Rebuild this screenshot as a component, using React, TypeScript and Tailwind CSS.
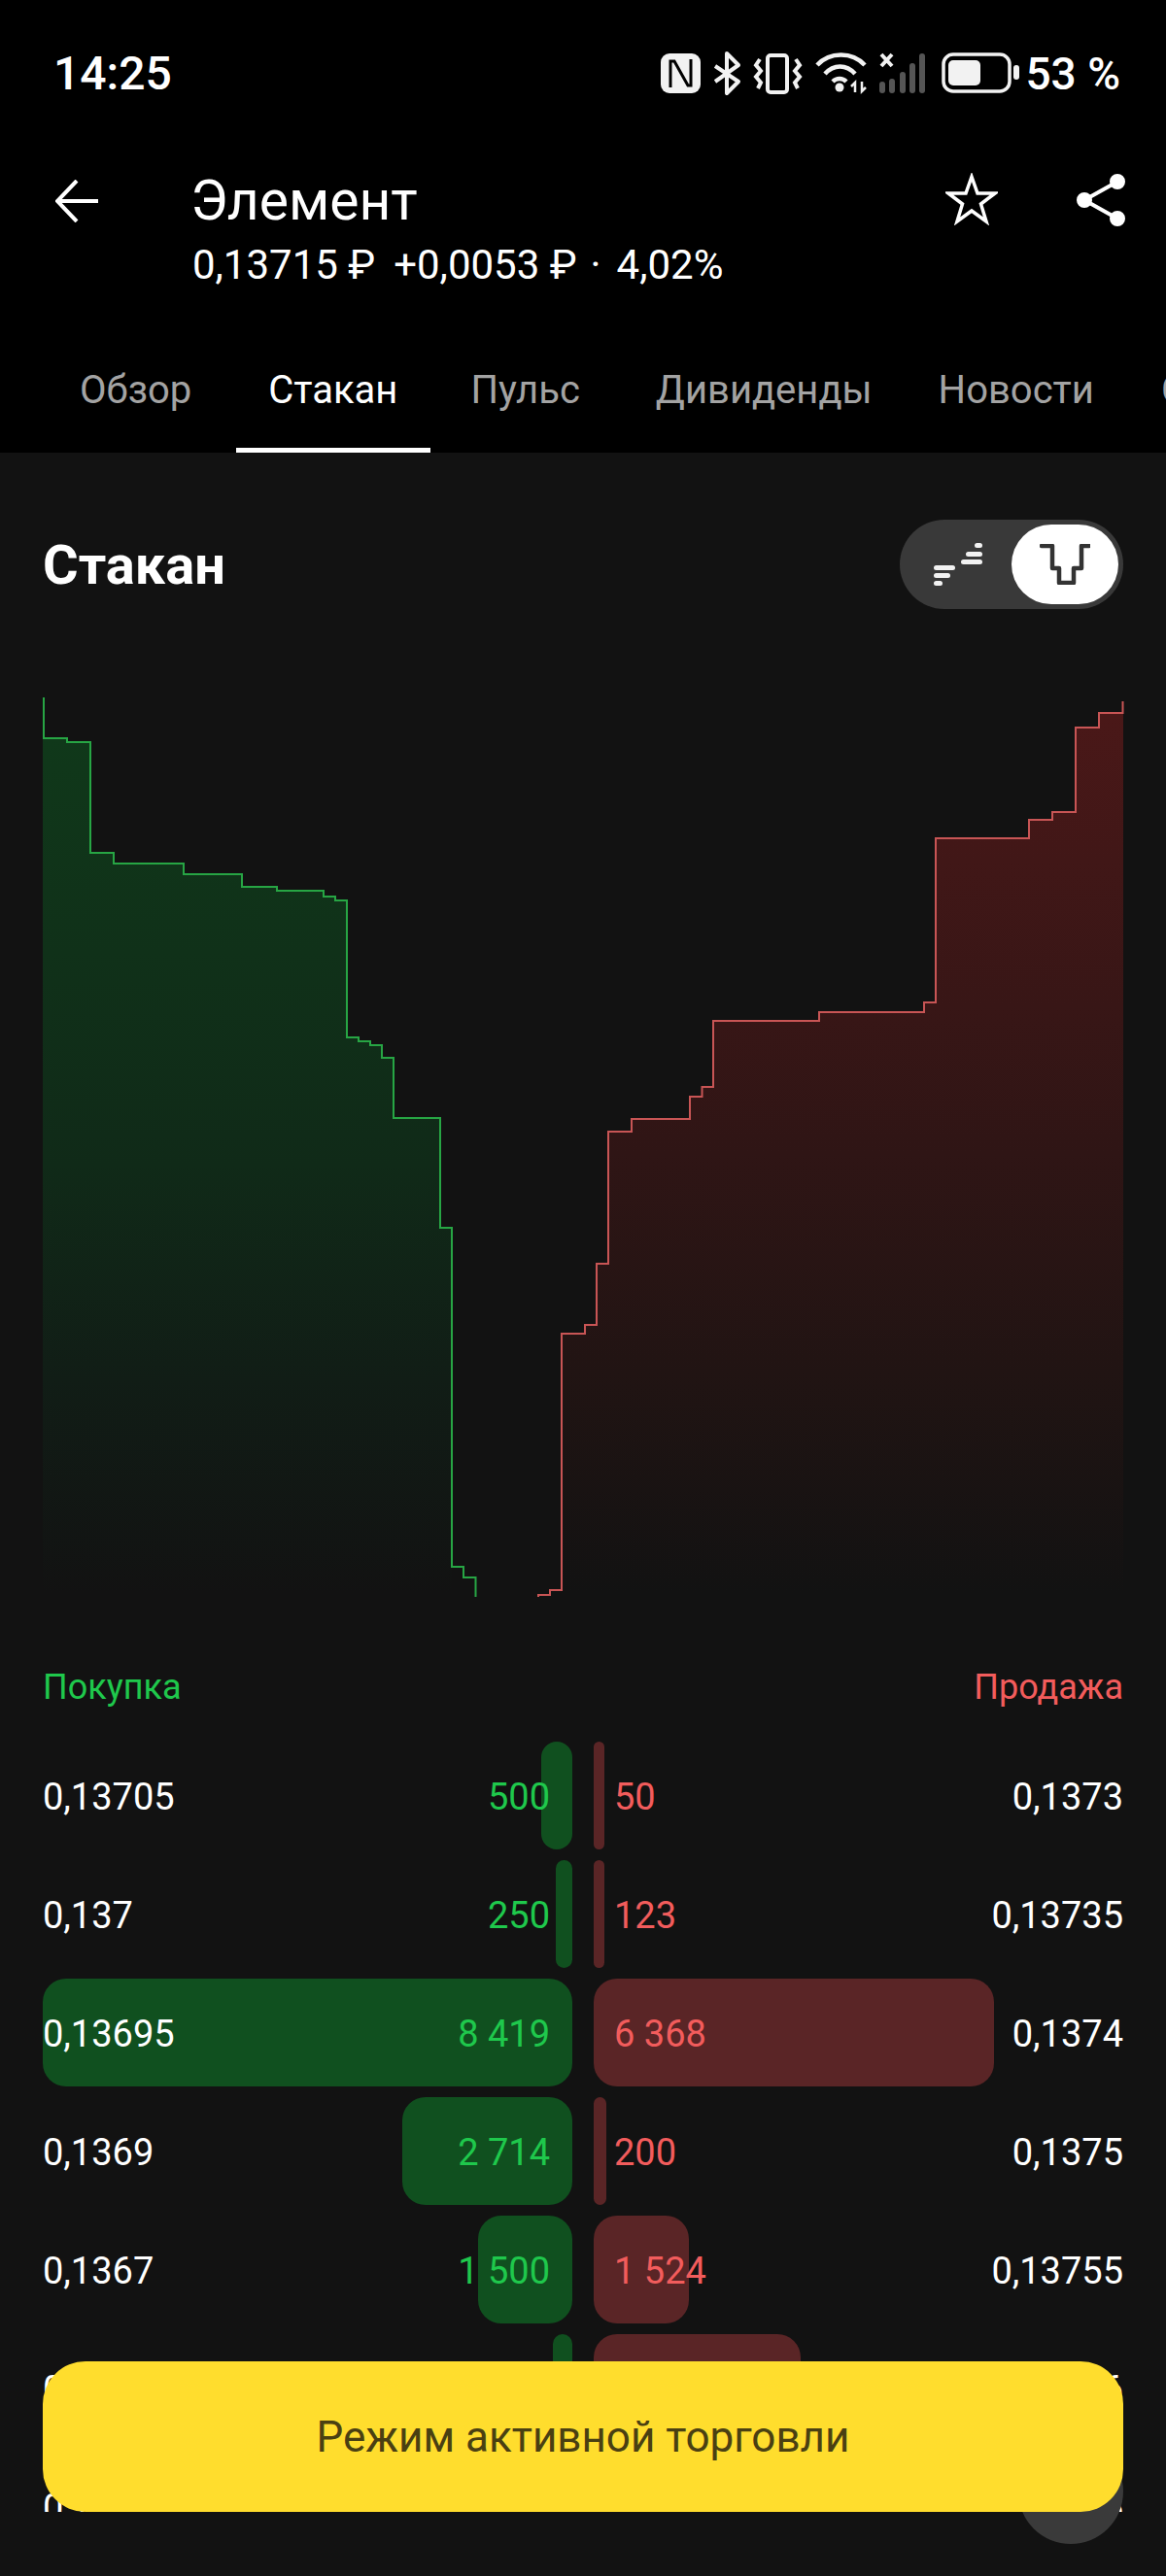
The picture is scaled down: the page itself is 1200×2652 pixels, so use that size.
const green = "M45 718V760H69V764H93V878H117V889H189V900H249V913H285V917H333V923H345V927H357V1068H369V1072H381V1076H393V1089H405V1151H453V1264H465V1613H477V1624H489.5V1644";
const red = "M1155.5 722V734H1131V749H1107V836H1083V844H1059V863H963V1032H951V1042H843V1051H734V1119H722.5V1129H710V1152H650V1165H626V1301H614V1364H602V1373H578V1637H566V1642H554V1644";
const greenFill = "M44 760H69V764H93V878H117V889H189V900H249V913H285V917H333V923H345V927H357V1068H369V1072H381V1076H393V1089H405V1151H453V1264H465V1640H44Z";
const redFill = "M1156 734H1131V749H1107V836H1083V844H1059V863H963V1032H951V1042H843V1051H734V1119H722.5V1129H710V1152H650V1165H626V1301H614V1364H602V1373H578V1640H1156Z";
const rows = [
  { buy: "0,13705", bq: "500", bw: 32, sq: "50", sw: 11, sell: "0,1373" },
  { buy: "0,137", bq: "250", bw: 17, sq: "123", sw: 11, sell: "0,13735" },
  { buy: "0,13695", bq: "8 419", bw: 545, sq: "6 368", sw: 412, sell: "0,1374" },
  { buy: "0,1369", bq: "2 714", bw: 175, sq: "200", sw: 13, sell: "0,1375" },
  { buy: "0,1367", bq: "1 500", bw: 97, sq: "1 524", sw: 98, sell: "0,13755" },
  { buy: "0,13665", bq: "300", bw: 20, sq: "2 250", sw: 213, sell: "0,1376" },
  { buy: "0,1366", bq: "100", bw: 12, sq: "400", sw: 24, sell: "0,13765" },
];
const tabs = [
  { name: "Обзор", cls: "mr-[79px]" },
  { name: "Стакан", cls: "mr-[75px]" },
  { name: "Пульс", cls: "mr-[78px]" },
  { name: "Дивиденды", cls: "mr-[68px]" },
  { name: "Новости", cls: "mr-[69px]" },
  { name: "События", cls: "" },
];

const StatusIcons = () => (
  <svg width="370" height="46" viewBox="0 0 370 46" fill="none">
    {/* nfc */}
    <rect x="0" y="2" width="41" height="41" rx="9" fill="#f2f2f2" />
    <path d="M10 37V10H14L28 35H31V8" stroke="#000" strokeWidth="3" />
    {/* bluetooth */}
    <path d="M56 15L80 31L68 43V2L80 14L56 31" stroke="#f2f2f2" strokeWidth="4" strokeLinejoin="round" />
    {/* vibrate */}
    <rect x="110" y="4" width="20" height="38" rx="3" stroke="#f2f2f2" strokeWidth="4" />
    <path d="M102 8L98 14L103 20L98 26L103 32L100 38M139 8L143 14L138 20L143 26L138 32L141 38" stroke="#f2f2f2" strokeWidth="4" />
    {/* wifi */}
    <path d="M161 14C174 0 197 0 210 14M169 23C178 13 191 13 200 23M177 31C181 27 187 27 191 31" stroke="#f2f2f2" strokeWidth="4.5" />
    <circle cx="184" cy="37" r="4.5" fill="#f2f2f2" />
    <path d="M200 42V32L196 36M207 31V41L211 37" stroke="#f2f2f2" strokeWidth="2.5" />
    {/* signal */}
    <path d="M227 3L238 15M238 3L227 15" stroke="#f2f2f2" strokeWidth="4" />
    <rect x="225" y="31" width="6" height="12" rx="3" fill="#555" />
    <rect x="235" y="28" width="6" height="15" rx="3" fill="#555" />
    <rect x="246" y="21" width="6" height="22" rx="3" fill="#555" />
    <rect x="256" y="12" width="6" height="31" rx="3" fill="#555" />
    <rect x="266" y="2" width="6" height="41" rx="3" fill="#555" />
    {/* battery */}
    <rect x="291" y="3" width="68" height="38" rx="10" stroke="#f2f2f2" strokeWidth="3.5" />
    <rect x="296" y="9" width="33" height="26" rx="5" fill="#f2f2f2" />
    <rect x="363" y="14" width="6" height="15" rx="3" fill="#f2f2f2" />
  </svg>
);

export default function App() {
  return (
    <div className="relative h-[2652px] w-[1200px] overflow-hidden bg-[#121212] font-['Roboto',sans-serif] text-white">
      <div className="flex h-[466px] flex-col bg-black">
        <div className="flex h-[152px] items-start justify-between pl-[55px] pr-[47px] pt-[47px]">
          <span className="text-[48px] font-medium leading-[58px]">14:25</span>
          <div className="flex items-center gap-[5px]">
            <StatusIcons />
            <span className="text-[46px] font-medium leading-[58px]">53 %</span>
          </div>
        </div>
        <div className="flex items-start pl-[57px] pr-[42px]">
          <svg className="mt-[33px] h-[44px] w-[44px]" viewBox="0 0 44 44" fill="none" stroke="#fff" strokeWidth="4">
            <path d="M44 22H2M22 1L2 22L22 43" />
          </svg>
          <div className="ml-[95px] mt-[23px] flex-1">
            <div className="text-[57px] leading-[64px]">Элемент</div>
            <div className="ml-[2px] mt-[12px] flex text-[42px] leading-[44px]">
              <span>0,13715 ₽</span>
              <span className="ml-[19px]">+0,0053 ₽</span>
              <span className="ml-[14px]">·</span>
              <span className="ml-[16px]">4,02%</span>
            </div>
          </div>
          <svg className="mt-[26px] h-[54px] w-[54px]" viewBox="0 0 54 54" fill="none" stroke="#fff" strokeWidth="3.5">
            <path d="M27 4L33 21H51L36.5 32L42 50L27 39L12 50L17.5 32L3 21H21Z" />
          </svg>
          <svg className="ml-[81px] mt-[27px] h-[54px] w-[50px]" viewBox="0 0 50 54" fill="#fff" stroke="#fff" strokeWidth="4">
            <path d="M42 8L8 27L42 46" fill="none" />
            <circle cx="42" cy="8" r="6" />
            <circle cx="8" cy="27" r="6" />
            <circle cx="42" cy="46" r="6" />
          </svg>
        </div>
        <div className="mt-auto flex h-[88px] overflow-hidden pl-[82px]">
          {tabs.map((t, i) => (
            <div key={t.name} className={`relative h-full shrink-0 text-[40px] leading-[48px] ${t.cls} ${i === 1 ? "text-white" : "text-[#a3a3a3]"}`}>
              {t.name}
              {i === 1 && <div className="absolute bottom-0 left-[-33px] right-[-34px] h-[5px] bg-white" />}
            </div>
          ))}
        </div>
      </div>

      <div className="mt-[69px] flex items-center justify-between px-[44px]">
        <h1 className="h-[92px] text-[56px] font-bold leading-[94px]">Стакан</h1>
        <div className="flex h-[92px] w-[230px] items-center justify-between rounded-full bg-[#393939] pl-[35px] pr-[5px]">
          <svg width="50" height="44" viewBox="0 0 50 44" fill="#f2f2f2">
            <rect x="0" y="23" width="22" height="5" rx="2.5" />
            <rect x="0" y="31" width="17" height="5" rx="2.5" />
            <rect x="0" y="39" width="9" height="5" rx="2.5" />
            <rect x="42" y="0" width="8" height="5" rx="2.5" />
            <rect x="33" y="9" width="17" height="5" rx="2.5" />
            <rect x="28" y="17" width="22" height="5" rx="2.5" />
          </svg>
          <div className="flex h-[82px] w-[110px] items-center justify-center rounded-full bg-white">
            <svg width="52" height="42" viewBox="0 0 52 42" fill="none" stroke="#333" strokeWidth="4.5" strokeLinecap="round" strokeLinejoin="round">
              <path d="M2 2H13V25H20V40H35V25H43V2H51" />
            </svg>
          </div>
        </div>
      </div>

      <svg className="mt-[83px] block" width="1200" height="936" viewBox="0 710 1200 936" fill="none">
        <defs>
          <linearGradient id="gf" x1="0" y1="0" x2="0" y2="1">
            <stop offset="0" stopColor="#10381a" />
            <stop offset="0.5" stopColor="#102a18" />
            <stop offset="0.75" stopColor="#111d16" />
            <stop offset="1" stopColor="#121212" />
          </linearGradient>
          <linearGradient id="rf" x1="0" y1="0" x2="0" y2="1">
            <stop offset="0" stopColor="#4a1818" />
            <stop offset="0.5" stopColor="#2f1515" />
            <stop offset="0.75" stopColor="#211413" />
            <stop offset="1" stopColor="#121212" />
          </linearGradient>
        </defs>
        <path d={greenFill} fill="url(#gf)" />
        <path d={redFill} fill="url(#rf)" />
        <path d={green} stroke="#27a544" strokeWidth="2" />
        <path d={red} stroke="#c85555" strokeWidth="2" />
      </svg>

      <div className="mt-[69px] flex justify-between px-[44px] text-[36px] leading-[44px]">
        <span className="text-[#1fc84c]">Покупка</span>
        <span className="text-[#f25c5c]">Продажа</span>
      </div>

      <div className="mt-[34px] flex flex-col gap-[11px] px-[44px] text-[38px]">
        {rows.map((r) => (
          <div key={r.buy} className="grid h-[111px] grid-cols-[545px_22px_545px] items-center">
            <div className="relative flex h-full items-center justify-between pr-[23px] pt-[3px]">
              <div className="absolute bottom-0 right-0 top-0 rounded-[24px] bg-[#10501f]" style={{ width: r.bw }} />
              <span className="relative">{r.buy}</span>
              <span className="relative text-[#1fc84c]">{r.bq}</span>
            </div>
            <div />
            <div className="relative flex h-full items-center justify-between pl-[21px] pt-[3px]">
              <div className="absolute bottom-0 left-0 top-0 rounded-[24px] bg-[#5a2526]" style={{ width: r.sw }} />
              <span className="relative text-[#f25c5c]">{r.sq}</span>
              <span className="relative">{r.sell}</span>
            </div>
          </div>
        ))}
      </div>

      <div className="absolute bottom-0 left-0 right-0 h-[66px] bg-[#121212]" />
      <div className="absolute bottom-[33px] right-[44px] h-[108px] w-[108px] rounded-full bg-[#3a3a3a]" />
      <button className="absolute bottom-[66px] left-[44px] right-[44px] h-[155px] rounded-[44px] bg-[#ffdd2d] text-[44px] text-[#4a4012]">
        Режим активной торговли
      </button>
    </div>
  );
}
